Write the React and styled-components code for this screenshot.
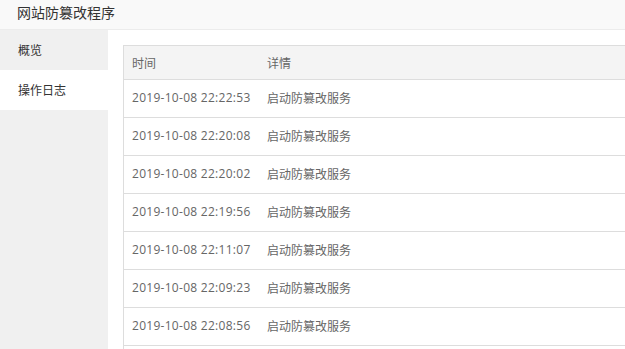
import React from "react";
import styled, { createGlobalStyle } from "styled-components";

const Global = createGlobalStyle`
  html, body { margin: 0; padding: 0; background: #fff; overflow: hidden; }
  body { font-family: "Open Sans", "Noto Sans CJK SC", sans-serif; }
`;

const Page = styled.div`
  width: 625px;
  height: 349px;
  display: flex;
  flex-direction: column;
  overflow: hidden;
`;

const TopBar = styled.div`
  flex: none;
  box-sizing: border-box;
  height: 30px;
  background: #f9f9f9;
  border-bottom: 1px solid #ececec;
  display: flex;
  align-items: center;
  padding: 0 0 4px 17px;
  font-size: 14px;
  color: #333;
  line-height: 1;
`;

const Body = styled.div`
  flex: 1;
  display: flex;
  min-height: 0;
`;

const Side = styled.div`
  width: 108px;
  flex: none;
  background: #f0f0f0;
  display: flex;
  flex-direction: column;
`;

const SideItem = styled.div`
  height: 40px;
  display: flex;
  align-items: center;
  padding-left: 18px;
  font-size: 12px;
  color: #333;
  background: ${(p) => (p.$active ? "#fff" : "transparent")};
`;

const Main = styled.div`
  flex: 1;
  padding: 15px 0 0 15px;
  overflow: hidden;
`;

const Table = styled.div`
  width: 560px;
  border: 1px solid #ddd;
  border-right: none;
  font-size: 12px;
`;

const Row = styled.div`
  display: grid;
  grid-template-columns: 135px 1fr;
  box-sizing: border-box;
  height: ${(p) => (p.$head ? "33px" : "38px")};
  padding-bottom: ${(p) => (p.$head ? "0" : "2px")};
  align-items: center;
  background: ${(p) => (p.$head ? "#f4f4f4" : "#fff")};
  border-top: ${(p) => (p.$head ? "none" : "1px solid #ddd")};
  color: #666;
`;

const Cell = styled.div`
  padding-left: 8px;
  white-space: nowrap;
  letter-spacing: ${(p) => (p.$num ? "0.28px" : "0")};
`;

const rows = [
  "2019-10-08 22:22:53",
  "2019-10-08 22:20:08",
  "2019-10-08 22:20:02",
  "2019-10-08 22:19:56",
  "2019-10-08 22:11:07",
  "2019-10-08 22:09:23",
  "2019-10-08 22:08:56",
];

export default function App() {
  return (
    <Page>
      <Global />
      <TopBar>网站防篡改程序</TopBar>
      <Body>
        <Side>
          <SideItem>概览</SideItem>
          <SideItem $active>操作日志</SideItem>
        </Side>
        <Main>
          <Table>
            <Row $head>
              <Cell>时间</Cell>
              <Cell>详情</Cell>
            </Row>
            {rows.map((t) => (
              <Row key={t}>
                <Cell $num>{t}</Cell>
                <Cell>启动防篡改服务</Cell>
              </Row>
            ))}
            <Row aria-hidden="true" />
          </Table>
        </Main>
      </Body>
    </Page>
  );
}
